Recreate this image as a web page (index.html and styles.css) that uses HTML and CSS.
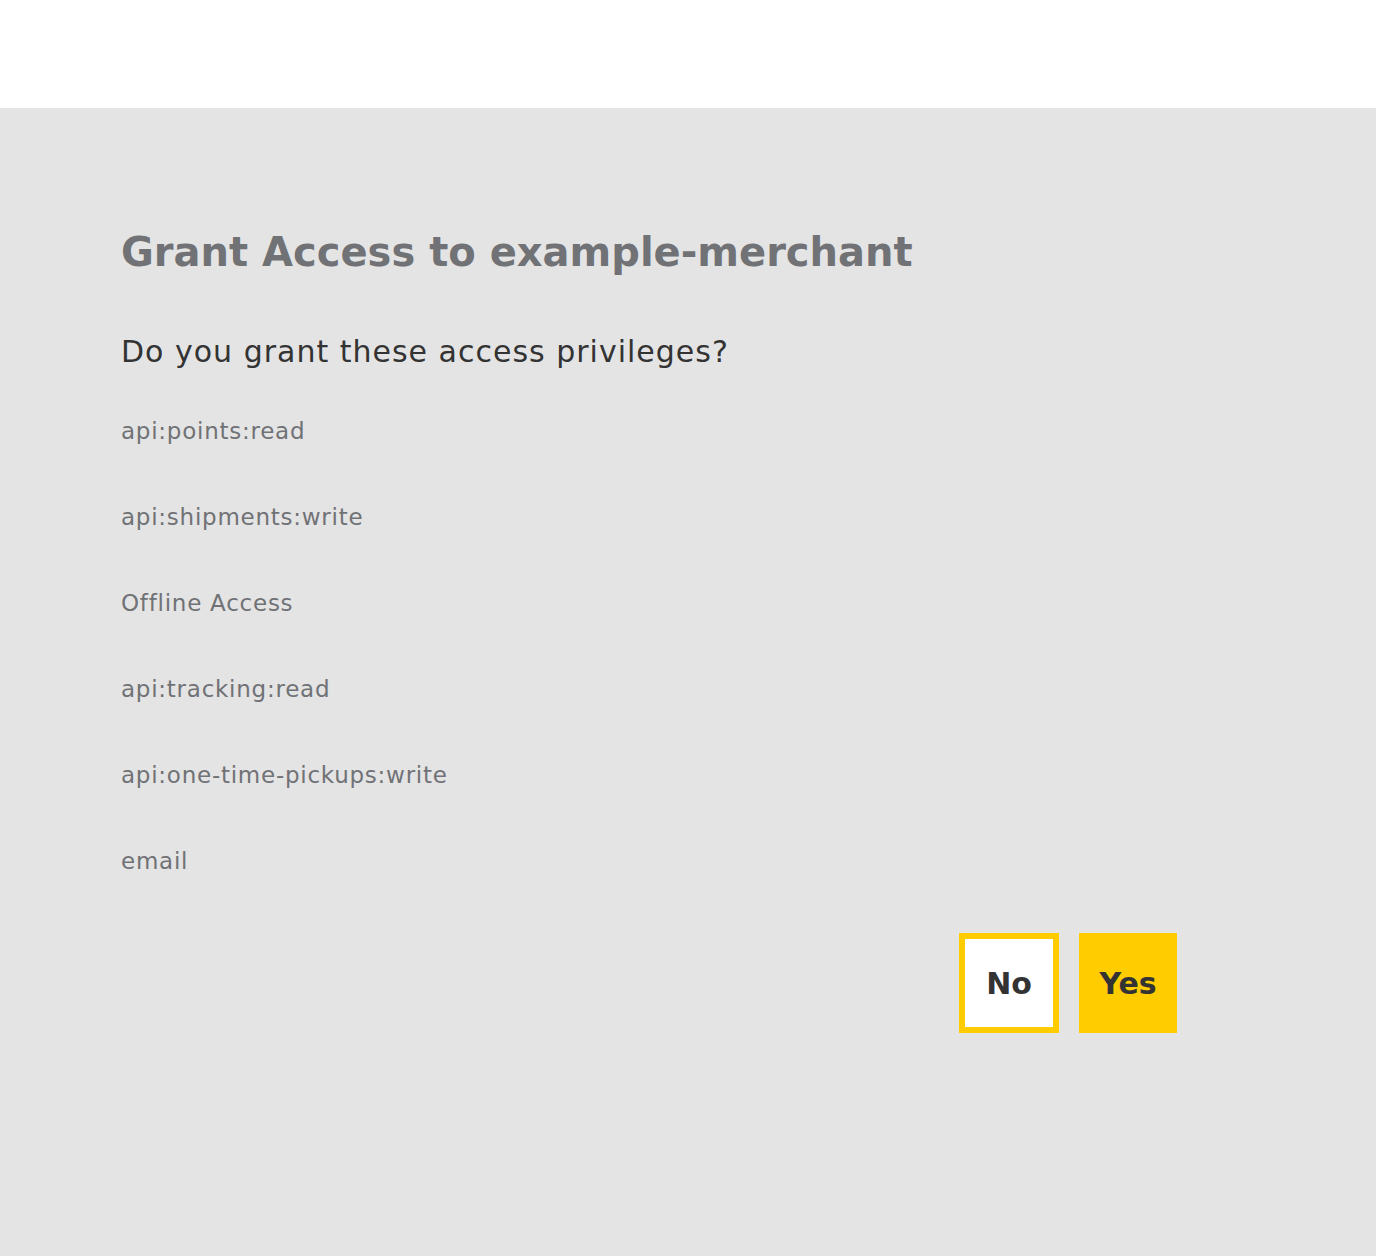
FILE: index.html
```html
<!DOCTYPE html>
<html lang="en">
<head>
<meta charset="utf-8">
<title>Grant Access</title>
<link rel="stylesheet" href="styles.css">
</head>
<body>
<header class="topbar"></header>
<main class="consent">
  <h1 class="consent-title">Grant Access to example-merchant</h1>
  <h2 class="consent-question">Do you grant these access privileges?</h2>
  <ul class="scope-list">
    <li class="scope">api:points:read</li>
    <li class="scope">api:shipments:write</li>
    <li class="scope">Offline Access</li>
    <li class="scope">api:tracking:read</li>
    <li class="scope">api:one-time-pickups:write</li>
    <li class="scope">email</li>
  </ul>
  <div class="actions">
    <button class="btn btn-no" type="button">No</button>
    <button class="btn btn-yes" type="button">Yes</button>
  </div>
</main>
</body>
</html>
```
FILE: styles.css
```css
html, body {
  margin: 0;
  padding: 0;
}
body {
  font-family: "DejaVu Sans", "Noto Sans", sans-serif;
  background: #e4e4e4;
  min-height: 1256px;
}
.topbar {
  height: 108px;
  background: #ffffff;
}
.consent {
  padding: 120px 199px 0 121px;
  display: flex;
  flex-direction: column;
}
.consent-title {
  margin: 0;
  font-size: 40px;
  line-height: 48px;
  font-weight: bold;
  color: #707276;
  letter-spacing: 0;
}
.consent-question {
  margin: 56px 0 0;
  font-size: 30px;
  line-height: 40px;
  font-weight: normal;
  color: #333333;
  letter-spacing: 1px;
}
.scope-list {
  list-style: none;
  margin: 44px 0 0;
  padding: 0;
  display: flex;
  flex-direction: column;
  gap: 56px;
}
.scope {
  font-size: 23px;
  line-height: 30px;
  color: #707276;
  letter-spacing: 0.75px;
}
.actions {
  display: flex;
  justify-content: flex-end;
  gap: 20px;
  margin-top: 57px;
}
.btn {
  box-sizing: border-box;
  height: 100px;
  border: 6px solid #ffcc00;
  font-family: "DejaVu Sans", sans-serif;
  font-size: 30px;
  font-weight: bold;
  color: #333333;
  padding: 0;
  cursor: pointer;
}
.btn-no {
  background: #ffffff;
  width: 100px;
}
.btn-yes {
  background: #ffcc00;
  width: 98px;
}
```
